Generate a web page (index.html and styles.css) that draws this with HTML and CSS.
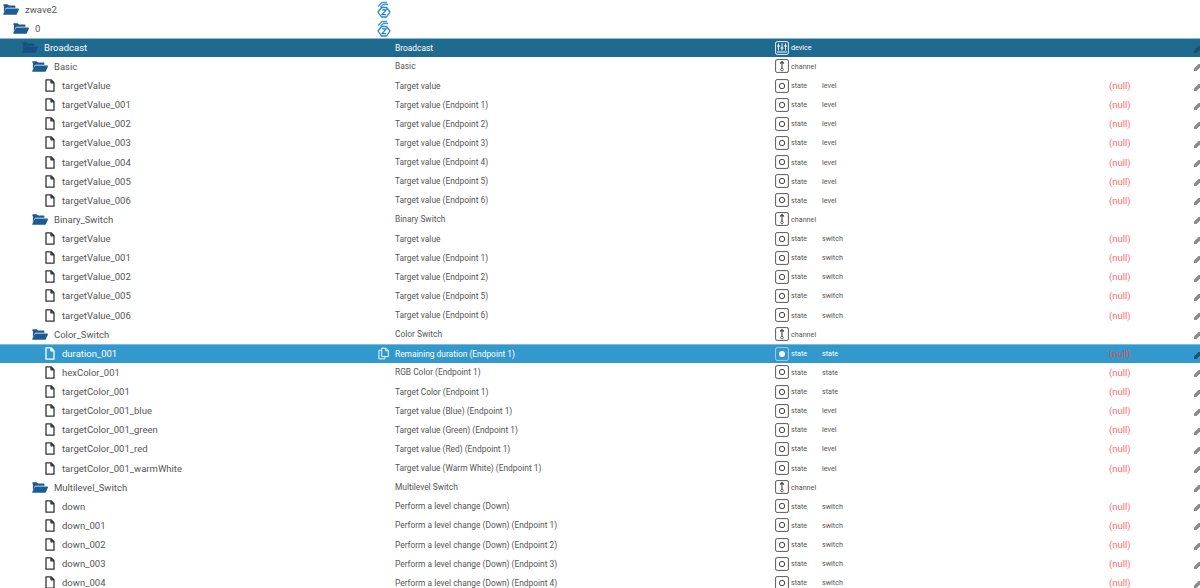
FILE: index.html
```html
<!DOCTYPE html>
<html lang="en">
<head>
    <meta charset="UTF-8">
    <title>Objects</title>
    <link rel="stylesheet" href="styles.css">
</head>
<body>
    <svg class="defs" width="0" height="0">
        <symbol id="folder" viewBox="0 0 18 12">
            <path d="M0 1.500C0 .7.600 0 1.400 0h3.800l1.600 1.600h6c.7 0 1.200.5 1.200 1.200V4H4.600c-.9 0-1.600.5-1.900 1.300L1 10V1.500z" fill="currentColor"/>
            <path d="M4 5h13.200c.6 0 1 .6.700 1.100l-2.400 5.200c-.2.400-.6.700-1 .7H.9c-.5 0-.8-.5-.6-.9L3 5.800c.2-.5.600-.8 1-.8z" fill="currentColor"/>
        </symbol>
        <symbol id="file" viewBox="0 0 10 13">
            <path d="M1 .8h5l3 3v8.400H1zM6 .8v3h3" fill="none" stroke="currentColor" stroke-width="1.300" stroke-linejoin="round"/>
        </symbol>
        <symbol id="zwave" viewBox="0 0 14 17">
            <path d="M1 5.500 5 1.500h5M3.500 6 6.500 3.500h4.500" fill="none" stroke="#3c9ad6" stroke-width="1.300"/>
            <path d="M4.500 6.500h5L13 11l-3.500 5h-5L1 11z" fill="#fff" stroke="#2288cc" stroke-width="1.300" stroke-linejoin="round"/>
            <path d="M5 8.800h4.200l-4.200 4.800h4.200" fill="none" stroke="#1f7fc0" stroke-width="1.200"/>
        </symbol>
        <symbol id="state" viewBox="0 0 14 14">
            <rect x=".6" y=".6" width="12.800" height="12.800" rx="1.500" fill="none" stroke="currentColor" stroke-width=".9"/>
            <circle cx="7" cy="7" r="2.700" fill="none" stroke="currentColor" stroke-width="1"/>
        </symbol>
        <symbol id="state-on" viewBox="0 0 14 14">
            <rect x=".6" y=".6" width="12.800" height="12.800" rx="1.500" fill="none" stroke="#a9d6ee" stroke-width=".9"/>
            <circle cx="7" cy="7" r="3" fill="#fff"/>
        </symbol>
        <symbol id="channel" viewBox="0 0 14 14">
            <rect x=".6" y=".6" width="12.800" height="12.800" rx="1.500" fill="none" stroke="currentColor" stroke-width=".9"/>
            <path d="M7 2.500v7M5 4.500 7 2.500 9 4.500" fill="none" stroke="currentColor" stroke-width="1.100"/>
            <circle cx="7" cy="10.500" r="1.300" fill="none" stroke="currentColor" stroke-width=".8"/>
        </symbol>
        <symbol id="device" viewBox="0 0 14 14">
            <rect x=".6" y=".6" width="12.800" height="12.800" rx="1.500" fill="none" stroke="#fff" stroke-width=".9"/>
            <path d="M3.500 2.500v7M7 2.500v7M10.500 2.500v7M2 5h3M5.500 7h3M9 5h3M2 11h10" fill="none" stroke="#fff" stroke-width="1"/>
        </symbol>
        <symbol id="pencil" viewBox="0 0 6 7">
            <path d="M0 7V4.500L4.500 0H6v3.500L2.500 7z" fill="currentColor"/>
        </symbol>
        <symbol id="copy" viewBox="0 0 12 13">
            <path d="M4 .7h4.500L11.300 3.500v6.300H4zM8.500.7v2.800h2.800M4 3H1v9.300h6.500V9.800" fill="none" stroke="currentColor" stroke-width="1"/>
        </symbol>
    </svg>

    <div class="tree">
        <div class="row">
            <div class="name lvl0"><svg class="ic-folder"><use href="#folder"/></svg>zwave2</div>
            <div class="title"><svg class="ic-zwave"><use href="#zwave"/></svg></div>
        </div>
        <div class="row">
            <div class="name lvl1"><svg class="ic-folder"><use href="#folder"/></svg>0</div>
            <div class="title"><svg class="ic-zwave"><use href="#zwave"/></svg></div>
        </div>
        <div class="row row-dark">
            <div class="name lvl2"><svg class="ic-folder"><use href="#folder"/></svg>Broadcast</div>
            <div class="title">Broadcast</div>
            <div class="type"><svg class="ic-type"><use href="#device"/></svg>device</div>
            <div class="edit"><svg class="ic-pencil"><use href="#pencil"/></svg></div>
        </div>

        <div class="row">
            <div class="name lvl3"><svg class="ic-folder"><use href="#folder"/></svg>Basic</div>
            <div class="title">Basic</div>
            <div class="type"><svg class="ic-type"><use href="#channel"/></svg>channel</div>
            <div class="edit"><svg class="ic-pencil"><use href="#pencil"/></svg></div>
        </div>
        <div class="row">
            <div class="name lvl4"><svg class="ic-file"><use href="#file"/></svg>targetValue</div>
            <div class="title">Target value</div>
            <div class="type"><svg class="ic-type"><use href="#state"/></svg>state</div>
            <div class="role">level</div>
            <div class="value">(null)</div>
            <div class="edit"><svg class="ic-pencil"><use href="#pencil"/></svg></div>
        </div>
        <div class="row">
            <div class="name lvl4"><svg class="ic-file"><use href="#file"/></svg>targetValue_001</div>
            <div class="title">Target value (Endpoint 1)</div>
            <div class="type"><svg class="ic-type"><use href="#state"/></svg>state</div>
            <div class="role">level</div>
            <div class="value">(null)</div>
            <div class="edit"><svg class="ic-pencil"><use href="#pencil"/></svg></div>
        </div>
        <div class="row">
            <div class="name lvl4"><svg class="ic-file"><use href="#file"/></svg>targetValue_002</div>
            <div class="title">Target value (Endpoint 2)</div>
            <div class="type"><svg class="ic-type"><use href="#state"/></svg>state</div>
            <div class="role">level</div>
            <div class="value">(null)</div>
            <div class="edit"><svg class="ic-pencil"><use href="#pencil"/></svg></div>
        </div>
        <div class="row">
            <div class="name lvl4"><svg class="ic-file"><use href="#file"/></svg>targetValue_003</div>
            <div class="title">Target value (Endpoint 3)</div>
            <div class="type"><svg class="ic-type"><use href="#state"/></svg>state</div>
            <div class="role">level</div>
            <div class="value">(null)</div>
            <div class="edit"><svg class="ic-pencil"><use href="#pencil"/></svg></div>
        </div>
        <div class="row">
            <div class="name lvl4"><svg class="ic-file"><use href="#file"/></svg>targetValue_004</div>
            <div class="title">Target value (Endpoint 4)</div>
            <div class="type"><svg class="ic-type"><use href="#state"/></svg>state</div>
            <div class="role">level</div>
            <div class="value">(null)</div>
            <div class="edit"><svg class="ic-pencil"><use href="#pencil"/></svg></div>
        </div>
        <div class="row">
            <div class="name lvl4"><svg class="ic-file"><use href="#file"/></svg>targetValue_005</div>
            <div class="title">Target value (Endpoint 5)</div>
            <div class="type"><svg class="ic-type"><use href="#state"/></svg>state</div>
            <div class="role">level</div>
            <div class="value">(null)</div>
            <div class="edit"><svg class="ic-pencil"><use href="#pencil"/></svg></div>
        </div>
        <div class="row">
            <div class="name lvl4"><svg class="ic-file"><use href="#file"/></svg>targetValue_006</div>
            <div class="title">Target value (Endpoint 6)</div>
            <div class="type"><svg class="ic-type"><use href="#state"/></svg>state</div>
            <div class="role">level</div>
            <div class="value">(null)</div>
            <div class="edit"><svg class="ic-pencil"><use href="#pencil"/></svg></div>
        </div>

        <div class="row">
            <div class="name lvl3"><svg class="ic-folder"><use href="#folder"/></svg>Binary_Switch</div>
            <div class="title">Binary Switch</div>
            <div class="type"><svg class="ic-type"><use href="#channel"/></svg>channel</div>
            <div class="edit"><svg class="ic-pencil"><use href="#pencil"/></svg></div>
        </div>
        <div class="row">
            <div class="name lvl4"><svg class="ic-file"><use href="#file"/></svg>targetValue</div>
            <div class="title">Target value</div>
            <div class="type"><svg class="ic-type"><use href="#state"/></svg>state</div>
            <div class="role">switch</div>
            <div class="value">(null)</div>
            <div class="edit"><svg class="ic-pencil"><use href="#pencil"/></svg></div>
        </div>
        <div class="row">
            <div class="name lvl4"><svg class="ic-file"><use href="#file"/></svg>targetValue_001</div>
            <div class="title">Target value (Endpoint 1)</div>
            <div class="type"><svg class="ic-type"><use href="#state"/></svg>state</div>
            <div class="role">switch</div>
            <div class="value">(null)</div>
            <div class="edit"><svg class="ic-pencil"><use href="#pencil"/></svg></div>
        </div>
        <div class="row">
            <div class="name lvl4"><svg class="ic-file"><use href="#file"/></svg>targetValue_002</div>
            <div class="title">Target value (Endpoint 2)</div>
            <div class="type"><svg class="ic-type"><use href="#state"/></svg>state</div>
            <div class="role">switch</div>
            <div class="value">(null)</div>
            <div class="edit"><svg class="ic-pencil"><use href="#pencil"/></svg></div>
        </div>
        <div class="row">
            <div class="name lvl4"><svg class="ic-file"><use href="#file"/></svg>targetValue_005</div>
            <div class="title">Target value (Endpoint 5)</div>
            <div class="type"><svg class="ic-type"><use href="#state"/></svg>state</div>
            <div class="role">switch</div>
            <div class="value">(null)</div>
            <div class="edit"><svg class="ic-pencil"><use href="#pencil"/></svg></div>
        </div>
        <div class="row">
            <div class="name lvl4"><svg class="ic-file"><use href="#file"/></svg>targetValue_006</div>
            <div class="title">Target value (Endpoint 6)</div>
            <div class="type"><svg class="ic-type"><use href="#state"/></svg>state</div>
            <div class="role">switch</div>
            <div class="value">(null)</div>
            <div class="edit"><svg class="ic-pencil"><use href="#pencil"/></svg></div>
        </div>

        <div class="row">
            <div class="name lvl3"><svg class="ic-folder"><use href="#folder"/></svg>Color_Switch</div>
            <div class="title">Color Switch</div>
            <div class="type"><svg class="ic-type"><use href="#channel"/></svg>channel</div>
            <div class="edit"><svg class="ic-pencil"><use href="#pencil"/></svg></div>
        </div>
        <div class="row row-selected">
            <div class="name lvl4"><svg class="ic-file"><use href="#file"/></svg>duration_001<svg class="ic-copy"><use href="#copy"/></svg></div>
            <div class="title">Remaining duration (Endpoint 1)</div>
            <div class="type"><svg class="ic-type"><use href="#state-on"/></svg>state</div>
            <div class="role">state</div>
            <div class="value">(null)</div>
            <div class="edit"><svg class="ic-pencil"><use href="#pencil"/></svg></div>
        </div>
        <div class="row">
            <div class="name lvl4"><svg class="ic-file"><use href="#file"/></svg>hexColor_001</div>
            <div class="title">RGB Color (Endpoint 1)</div>
            <div class="type"><svg class="ic-type"><use href="#state"/></svg>state</div>
            <div class="role">state</div>
            <div class="value">(null)</div>
            <div class="edit"><svg class="ic-pencil"><use href="#pencil"/></svg></div>
        </div>
        <div class="row">
            <div class="name lvl4"><svg class="ic-file"><use href="#file"/></svg>targetColor_001</div>
            <div class="title">Target Color (Endpoint 1)</div>
            <div class="type"><svg class="ic-type"><use href="#state"/></svg>state</div>
            <div class="role">state</div>
            <div class="value">(null)</div>
            <div class="edit"><svg class="ic-pencil"><use href="#pencil"/></svg></div>
        </div>
        <div class="row">
            <div class="name lvl4"><svg class="ic-file"><use href="#file"/></svg>targetColor_001_blue</div>
            <div class="title">Target value (Blue) (Endpoint 1)</div>
            <div class="type"><svg class="ic-type"><use href="#state"/></svg>state</div>
            <div class="role">level</div>
            <div class="value">(null)</div>
            <div class="edit"><svg class="ic-pencil"><use href="#pencil"/></svg></div>
        </div>
        <div class="row">
            <div class="name lvl4"><svg class="ic-file"><use href="#file"/></svg>targetColor_001_green</div>
            <div class="title">Target value (Green) (Endpoint 1)</div>
            <div class="type"><svg class="ic-type"><use href="#state"/></svg>state</div>
            <div class="role">level</div>
            <div class="value">(null)</div>
            <div class="edit"><svg class="ic-pencil"><use href="#pencil"/></svg></div>
        </div>
        <div class="row">
            <div class="name lvl4"><svg class="ic-file"><use href="#file"/></svg>targetColor_001_red</div>
            <div class="title">Target value (Red) (Endpoint 1)</div>
            <div class="type"><svg class="ic-type"><use href="#state"/></svg>state</div>
            <div class="role">level</div>
            <div class="value">(null)</div>
            <div class="edit"><svg class="ic-pencil"><use href="#pencil"/></svg></div>
        </div>
        <div class="row">
            <div class="name lvl4"><svg class="ic-file"><use href="#file"/></svg>targetColor_001_warmWhite</div>
            <div class="title">Target value (Warm White) (Endpoint 1)</div>
            <div class="type"><svg class="ic-type"><use href="#state"/></svg>state</div>
            <div class="role">level</div>
            <div class="value">(null)</div>
            <div class="edit"><svg class="ic-pencil"><use href="#pencil"/></svg></div>
        </div>

        <div class="row">
            <div class="name lvl3"><svg class="ic-folder"><use href="#folder"/></svg>Multilevel_Switch</div>
            <div class="title">Multilevel Switch</div>
            <div class="type"><svg class="ic-type"><use href="#channel"/></svg>channel</div>
            <div class="edit"><svg class="ic-pencil"><use href="#pencil"/></svg></div>
        </div>
        <div class="row">
            <div class="name lvl4"><svg class="ic-file"><use href="#file"/></svg>down</div>
            <div class="title">Perform a level change (Down)</div>
            <div class="type"><svg class="ic-type"><use href="#state"/></svg>state</div>
            <div class="role">switch</div>
            <div class="value">(null)</div>
            <div class="edit"><svg class="ic-pencil"><use href="#pencil"/></svg></div>
        </div>
        <div class="row">
            <div class="name lvl4"><svg class="ic-file"><use href="#file"/></svg>down_001</div>
            <div class="title">Perform a level change (Down) (Endpoint 1)</div>
            <div class="type"><svg class="ic-type"><use href="#state"/></svg>state</div>
            <div class="role">switch</div>
            <div class="value">(null)</div>
            <div class="edit"><svg class="ic-pencil"><use href="#pencil"/></svg></div>
        </div>
        <div class="row">
            <div class="name lvl4"><svg class="ic-file"><use href="#file"/></svg>down_002</div>
            <div class="title">Perform a level change (Down) (Endpoint 2)</div>
            <div class="type"><svg class="ic-type"><use href="#state"/></svg>state</div>
            <div class="role">switch</div>
            <div class="value">(null)</div>
            <div class="edit"><svg class="ic-pencil"><use href="#pencil"/></svg></div>
        </div>
        <div class="row">
            <div class="name lvl4"><svg class="ic-file"><use href="#file"/></svg>down_003</div>
            <div class="title">Perform a level change (Down) (Endpoint 3)</div>
            <div class="type"><svg class="ic-type"><use href="#state"/></svg>state</div>
            <div class="role">switch</div>
            <div class="value">(null)</div>
            <div class="edit"><svg class="ic-pencil"><use href="#pencil"/></svg></div>
        </div>
        <div class="row">
            <div class="name lvl4"><svg class="ic-file"><use href="#file"/></svg>down_004</div>
            <div class="title">Perform a level change (Down) (Endpoint 4)</div>
            <div class="type"><svg class="ic-type"><use href="#state"/></svg>state</div>
            <div class="role">switch</div>
            <div class="value">(null)</div>
            <div class="edit"><svg class="ic-pencil"><use href="#pencil"/></svg></div>
        </div>
    </div>
</body>
</html>
```

FILE: styles.css
```css
html, body {
    margin: 0;
    height: 100%;
    overflow: hidden;
    background-color: white;
}

body {
    font-family: 'Roboto', 'Noto Sans', sans-serif;
    color: #555;
}

.defs {
    display: block;
    height: 0;
}

.tree {
    display: flex;
    flex-direction: column;
}

.row {
    display: grid;
    grid-template-columns: 395px 380px 47px 287px 1fr 6px;
    align-items: center;
    height: 19.13px;
    padding-bottom: 1px;
    flex: none;
    box-sizing: border-box;
}

.row > * {
    grid-row: 1;
}

.row-dark {
    background-color: #1f6a8f;
    border-top: 1px solid #8cbad0;
    color: white;
}

.row-selected {
    background-color: #3399cc;
    border-top: 1px solid #79bde0;
    color: white;
}

.name {
    grid-column: 1;
    display: flex;
    align-items: center;
    font-size: 9.5px;
    white-space: nowrap;
}

.lvl0 { padding-left: 3px; }
.lvl1 { padding-left: 13px; }
.lvl2 { padding-left: 22px; }
.lvl3 { padding-left: 32px; }
.lvl4 { padding-left: 45px; }

.ic-folder {
    width: 16px;
    height: 11px;
    margin-right: 6px;
    color: #1c5a92;
}

.row-dark .ic-folder {
    color: #174f80;
}

.ic-file {
    width: 10px;
    height: 13px;
    margin-right: 7px;
    color: #333;
}

.row-selected .ic-file {
    color: white;
}

.ic-copy {
    width: 11px;
    height: 13px;
    margin-left: auto;
    margin-right: 6px;
    color: white;
}

.ic-zwave {
    display: block;
    width: 14px;
    height: 17px;
    margin-left: -18px;
}

.title {
    grid-column: 2;
    font-size: 8.4px;
    white-space: nowrap;
}

.type {
    grid-column: 3;
    display: flex;
    align-items: center;
    font-size: 7.2px;
    white-space: nowrap;
}

.ic-type {
    width: 14px;
    height: 14px;
    margin-right: 2px;
    color: #444;
}

.role {
    grid-column: 4;
    font-size: 7.2px;
}

.value {
    grid-column: 5;
    font-size: 9.5px;
    color: #ff6b6b;
}

.row-selected .value {
    color: #d9534f;
}

.edit {
    grid-column: 6;
    justify-self: end;
    display: flex;
    padding-top: 3px;
    color: #8a8a8a;
}

.row-dark .edit, .row-selected .edit {
    color: #1d4f6e;
}

.ic-pencil {
    width: 6px;
    height: 7px;
    display: block;
}
```
